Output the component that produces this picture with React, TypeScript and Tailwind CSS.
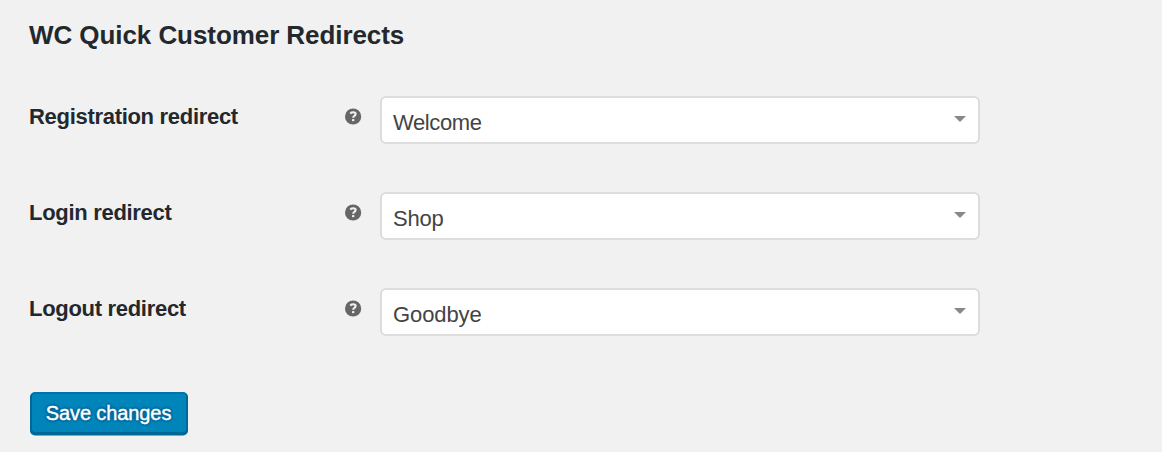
const rows = [
  { label: "Registration redirect", value: "Welcome", spacing: "tracking-[-0.4px]" },
  { label: "Login redirect", value: "Shop", spacing: "tracking-[-0.2px]" },
  { label: "Logout redirect", value: "Goodbye", spacing: "tracking-[-0.1px]" },
];

function Help() {
  return (
    <svg className="block size-[17px]" viewBox="0 0 17 17">
      <circle cx="8.1" cy="8.5" r="8.1" fill="#666" />
      <path d="M5.2 5.5Q6.6 4.3 8.2 4.3Q10.6 4.3 10.6 6.1Q10.6 7.1 9.4 7.9Q8.2 8.6 8.2 9.8" fill="none" stroke="#f1f1f1" strokeWidth="2.1" />
      <rect x="7" y="11" width="2.4" height="2.3" rx="0.8" fill="#f1f1f1" />
    </svg>
  );
}

export default function App() {
  return (
    <main className="flex h-[452px] w-full flex-col items-start bg-[#f1f1f1] pl-[29px] pt-[19px] font-['Liberation_Sans',Arial,sans-serif] text-[#23282d]">
      <h1 className="h-8 whitespace-nowrap text-[26px] font-bold leading-8 tracking-[-0.07px]">WC Quick Customer Redirects</h1>
      <div className="mt-[45px] flex flex-col gap-12">
        {rows.map((r) => (
          <div key={r.label} className="flex h-12 items-start">
            <label className="w-[316px] whitespace-nowrap pt-[7px] text-[22px] font-bold leading-7 tracking-[-0.3px]">{r.label}</label>
            <div className="w-[35px] pt-3"><Help /></div>
            <button className="flex h-12 w-[600px] items-center justify-between rounded-[6px] border-2 border-[#ddd] bg-white pl-[11px] pr-[12px] text-[22px] leading-7 text-[#444]">
              <span className={`pt-1.5 ${r.spacing}`}>{r.value}</span>
              <svg className="mb-0.5 h-[6px] w-3" viewBox="0 0 12 6"><path d="M0 0h12L6 6z" fill="#888" /></svg>
            </button>
          </div>
        ))}
      </div>
      <button className="ml-px mt-14 h-[42px] w-[158px] whitespace-nowrap rounded-[5px] border-2 border-[#006799] border-t-[#0073aa] bg-[#0085ba] pr-px text-[20px] leading-7 tracking-[-0.1px] text-white shadow-[0_1.5px_0_#006799] [-webkit-text-stroke:0.4px_white] [text-shadow:0_-2px_2px_#006799,2px_0_2px_#006799,0_2px_2px_#006799,-2px_0_2px_#006799]">Save changes</button>
    </main>
  );
}
